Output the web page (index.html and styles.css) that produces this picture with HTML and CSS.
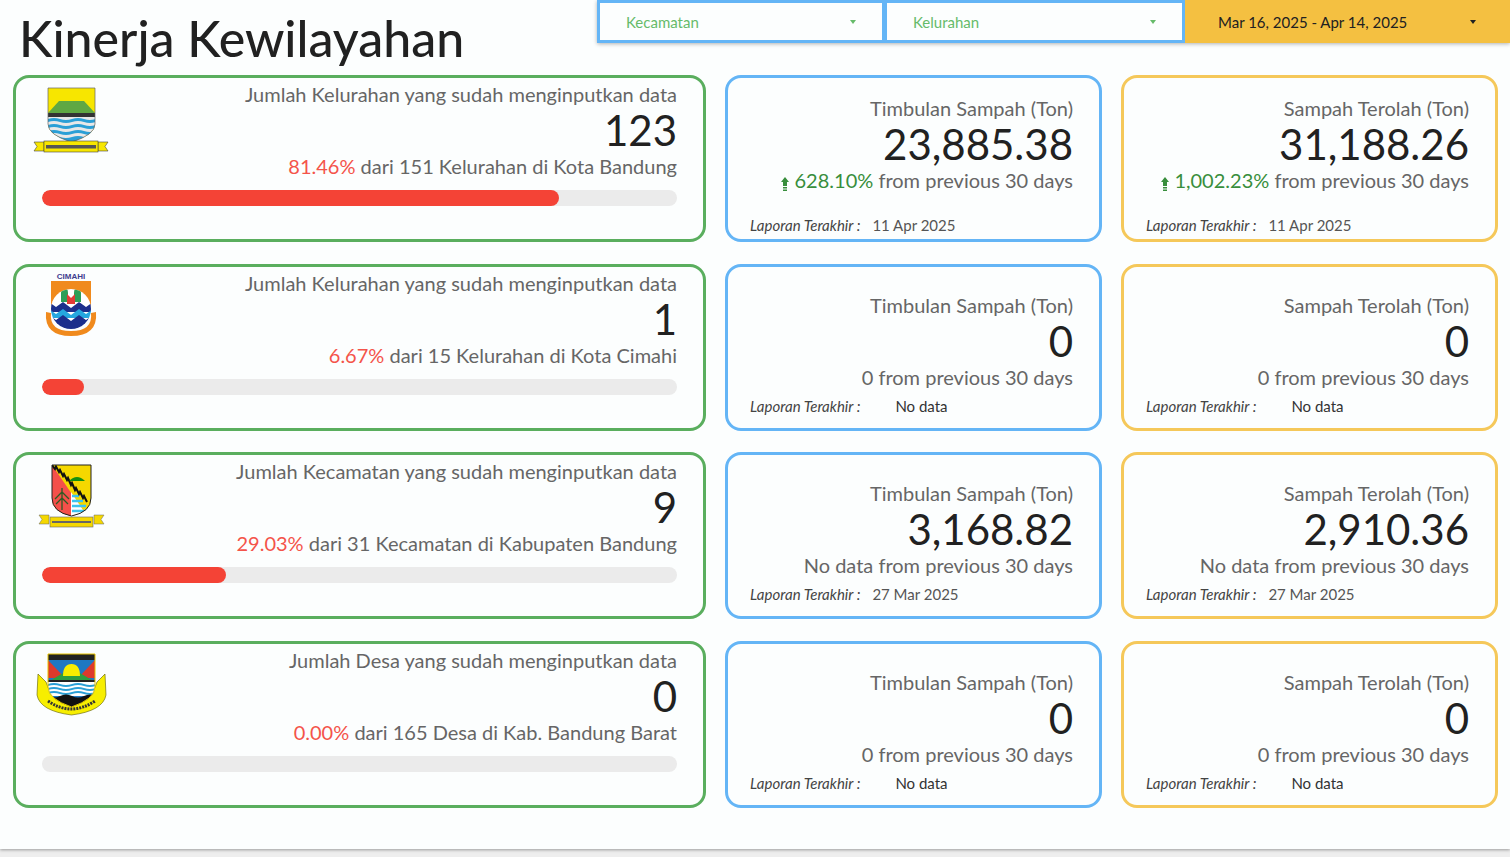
FILE: index.html
```html
<!DOCTYPE html>
<html lang="en">
<head>
    <meta charset="UTF-8">
    <meta name="viewport" content="width=device-width, initial-scale=1.0">
    <title>Kinerja Kewilayahan</title>
    <link rel="stylesheet" href="styles.css">
</head>
<body>
    <div class="page">
        <header class="header">
            <h1>Kinerja Kewilayahan</h1>
            <div class="filters">
                <div class="select select-kec"><span>Kecamatan</span><i class="caret"></i></div>
                <div class="select select-kel"><span>Kelurahan</span><i class="caret"></i></div>
                <div class="date-range"><span>Mar 16, 2025 - Apr 14, 2025</span><i class="caret"></i></div>
            </div>
        </header>

        <div class="grid">
            <!-- Kota Bandung -->
            <div class="card region">
                <div class="region-top">
                    <svg class="logo" viewBox="0 0 80 72">
                        <defs><clipPath id="bdg"><path d="M17 5H64V41Q64 52 40.500 59Q17 52 17 41Z"/></clipPath></defs>
                        <g clip-path="url(#bdg)">
                            <rect x="17" y="5" width="47" height="54" fill="#f7e600"/>
                            <path d="M17 30L28 18H53L64 30V33H17Z" fill="#5fa843"/>
                            <rect x="17" y="30" width="47" height="4" fill="#333"/>
                            <rect x="17" y="34" width="47" height="25" fill="#e8e8e8"/>
                            <path d="M17 36q6 -2 12 0t12 0t12 0t12 0v3q-6 2 -12 0t-12 0t-12 0t-12 0z" fill="#2a9fd6"/>
                            <path d="M17 42q6 -2 12 0t12 0t12 0t12 0v3q-6 2 -12 0t-12 0t-12 0t-12 0z" fill="#2a9fd6"/>
                            <path d="M17 48q6 -2 12 0t12 0t12 0t12 0v3q-6 2 -12 0t-12 0t-12 0t-12 0z" fill="#2a9fd6"/>
                            <path d="M17 54q6 -2 12 0t12 0t12 0t12 0v5h-47z" fill="#2a9fd6"/>
                        </g>
                        <path d="M17 5H64V41Q64 52 40.500 59Q17 52 17 41Z" fill="none" stroke="#666" stroke-width=".7"/>
                        <path d="M3 59H13V68H3L6 63.500ZM77 59H67V68H77L74 63.500Z" fill="#f7e600" stroke="#444" stroke-width=".6"/>
                        <rect x="13" y="58" width="54" height="11" fill="#f7e600" stroke="#444" stroke-width=".6"/>
                        <rect x="15" y="62" width="50" height="3.500" fill="#555"/>
                    </svg>
                    <div class="region-text">
                        <div class="card-title">Jumlah Kelurahan yang sudah menginputkan data</div>
                        <div class="big-number">123</div>
                        <div class="card-sub"><span class="pct-red">81.46%</span> dari 151 Kelurahan di Kota Bandung</div>
                    </div>
                </div>
                <div class="bar"><div class="bar-fill" style="width: 81.46%"></div></div>
            </div>
            <div class="card stat stat-blue stat-raised">
                <div class="stat-body">
                    <div class="card-title">Timbulan Sampah (Ton)</div>
                    <div class="big-number">23,885.38</div>
                    <div class="card-sub"><svg class="up" viewBox="0 0 8 14"><path d="M4 0L8 5H6V9H2V5H0ZM2 10H6V11.500H2ZM2 12.500H6V14H2Z"/></svg> <span class="pct-green">628.10%</span> from previous 30 days</div>
                </div>
                <div class="stat-foot"><em>Laporan Terakhir :</em><span class="foot-date">11 Apr 2025</span></div>
            </div>
            <div class="card stat stat-yellow stat-raised">
                <div class="stat-body">
                    <div class="card-title">Sampah Terolah (Ton)</div>
                    <div class="big-number">31,188.26</div>
                    <div class="card-sub"><svg class="up" viewBox="0 0 8 14"><path d="M4 0L8 5H6V9H2V5H0ZM2 10H6V11.500H2ZM2 12.500H6V14H2Z"/></svg> <span class="pct-green">1,002.23%</span> from previous 30 days</div>
                </div>
                <div class="stat-foot"><em>Laporan Terakhir :</em><span class="foot-date">11 Apr 2025</span></div>
            </div>

            <!-- Kota Cimahi -->
            <div class="card region">
                <div class="region-top">
                    <svg class="logo" viewBox="0 0 80 72">
                        <defs><clipPath id="cmh"><circle cx="40" cy="37" r="20"/></clipPath></defs>
                        <text class="logo-word" x="40" y="7" text-anchor="middle">CIMAHI</text>
                        <path d="M20 9H60V36H20Z" fill="#f08a1d"/>
                        <circle cx="40" cy="37" r="20" fill="#fff"/>
                        <g clip-path="url(#cmh)">
                            <path d="M30 30V21q0 -5 3.500 -5t3.500 5V30ZM43 30V21q0 -5 3.500 -5t3.500 5V30Z" fill="#2e9e57"/>
                            <path d="M36 22L40 26L44 22V32H36Z" fill="#e23b36"/>
                            <path d="M18 30l7 5l7 -5l8 6l8 -6l7 5l7 -5V40H18Z" fill="#1c2f8c"/>
                            <path d="M18 37l7 5l7 -5l8 6l8 -6l7 5l7 -5V46H18Z" fill="#25a7df"/>
                            <path d="M18 43l7 5l7 -5l8 6l8 -6l7 5l7 -5V60H18Z" fill="#1c2f8c"/>
                        </g>
                        <path d="M15 40Q13 64 40 64Q67 64 65 40L60 41Q62 59 40 59Q18 59 20 41Z" fill="#f08a1d"/>
                    </svg>
                    <div class="region-text">
                        <div class="card-title">Jumlah Kelurahan yang sudah menginputkan data</div>
                        <div class="big-number">1</div>
                        <div class="card-sub"><span class="pct-red">6.67%</span> dari 15 Kelurahan di Kota Cimahi</div>
                    </div>
                </div>
                <div class="bar"><div class="bar-fill" style="width: 6.67%"></div></div>
            </div>
            <div class="card stat stat-blue">
                <div class="stat-body">
                    <div class="card-title">Timbulan Sampah (Ton)</div>
                    <div class="big-number">0</div>
                    <div class="card-sub">0 from previous 30 days</div>
                </div>
                <div class="stat-foot"><em>Laporan Terakhir :</em><span class="foot-nodata">No data</span></div>
            </div>
            <div class="card stat stat-yellow">
                <div class="stat-body">
                    <div class="card-title">Sampah Terolah (Ton)</div>
                    <div class="big-number">0</div>
                    <div class="card-sub">0 from previous 30 days</div>
                </div>
                <div class="stat-foot"><em>Laporan Terakhir :</em><span class="foot-nodata">No data</span></div>
            </div>

            <!-- Kabupaten Bandung -->
            <div class="card region">
                <div class="region-top">
                    <svg class="logo" viewBox="0 0 80 72">
                        <defs><clipPath id="kab"><path d="M21 5H60V38Q60 52 40.500 56Q21 52 21 38Z"/></clipPath></defs>
                        <g clip-path="url(#kab)">
                            <rect x="21" y="5" width="39" height="52" fill="#f5d800"/>
                            <path d="M21 5L56 56H21Z" fill="#f4504a"/>
                            <path d="M40 32L56 56H40Z" fill="#fff"/>
                            <path d="M41 36H48M41 41H52M41 46H55M41 51H57" stroke="#3cc3ee" stroke-width="2.500"/>
                            <path d="M21 5L24 9L25 6.500L28 12L29 10L32 16L33 14L36 20L37 18L40 25L41 23L44 30L45 28L48 34L49 32L52 38L53 36L56 42" fill="none" stroke="#111" stroke-width="2"/>
                        </g>
                        <path d="M38 19Q46 11 54 19Z" fill="#14900f" transform="translate(0 2)"/>
                        <path d="M31 28V50M31 32L24 39M31 32L38 39M31 38L25 44M31 38L37 44" stroke="#2c5a22" stroke-width="1.300" fill="none"/>
                        <path d="M21 5H60V38Q60 52 40.500 56Q21 52 21 38Z" fill="none" stroke="#222" stroke-width="1"/>
                        <path d="M8 55H18V64H8L11 59.500ZM73 55H63V64H73L70 59.500Z" fill="#f5d800" stroke="#666" stroke-width=".5"/>
                        <rect x="19" y="57" width="43" height="10" fill="#f5d800" stroke="#666" stroke-width=".6"/>
                        <rect x="21" y="61" width="39" height="2" fill="#666"/>
                    </svg>
                    <div class="region-text">
                        <div class="card-title">Jumlah Kecamatan yang sudah menginputkan data</div>
                        <div class="big-number">9</div>
                        <div class="card-sub"><span class="pct-red">29.03%</span> dari 31 Kecamatan di Kabupaten Bandung</div>
                    </div>
                </div>
                <div class="bar"><div class="bar-fill" style="width: 29.03%"></div></div>
            </div>
            <div class="card stat stat-blue">
                <div class="stat-body">
                    <div class="card-title">Timbulan Sampah (Ton)</div>
                    <div class="big-number">3,168.82</div>
                    <div class="card-sub">No data from previous 30 days</div>
                </div>
                <div class="stat-foot"><em>Laporan Terakhir :</em><span class="foot-date">27 Mar 2025</span></div>
            </div>
            <div class="card stat stat-yellow">
                <div class="stat-body">
                    <div class="card-title">Sampah Terolah (Ton)</div>
                    <div class="big-number">2,910.36</div>
                    <div class="card-sub">No data from previous 30 days</div>
                </div>
                <div class="stat-foot"><em>Laporan Terakhir :</em><span class="foot-date">27 Mar 2025</span></div>
            </div>

            <!-- Kabupaten Bandung Barat -->
            <div class="card region">
                <div class="region-top">
                    <svg class="logo" viewBox="0 0 80 72">
                        <defs><clipPath id="kbb"><path d="M17 5H64V38Q64 50 40.500 58Q17 50 17 38Z"/></clipPath></defs>
                        <path d="M7 25L15 33L20 46Q40 62 61 46L66 33L74 25L75 46Q72 62 40.500 66Q9 62 6 46Z" fill="#f7ee00" stroke="#5b5a00" stroke-width=".6"/>
                        <g clip-path="url(#kbb)">
                            <rect x="17" y="5" width="47" height="54" fill="#1f78c1"/>
                            <rect x="17" y="5" width="47" height="6" fill="#222"/>
                            <path d="M17 11L34 29H17ZM64 11L47 29H64Z" fill="#dd3a2c"/>
                            <path d="M17 33L32 24H49L64 33Z" fill="#2e9e3f"/>
                            <path d="M32 27Q32 15 40.500 15Q49 15 49 27Z" fill="#f7ee00"/>
                            <rect x="17" y="31" width="47" height="2" fill="#222"/>
                            <rect x="17" y="33" width="47" height="14" fill="#fff"/>
                            <path d="M17 35q6 -2 12 0t12 0t12 0t12 0v2q-6 2 -12 0t-12 0t-12 0t-12 0zM17 39q6 -2 12 0t12 0t12 0t12 0v2q-6 2 -12 0t-12 0t-12 0t-12 0zM17 43q6 -2 12 0t12 0t12 0t12 0v2q-6 2 -12 0t-12 0t-12 0t-12 0z" fill="#2a9fd6"/>
                            <path d="M17 47q6 3 12 0t12 0t12 0t12 0V59H17Z" fill="#111"/>
                        </g>
                        <path d="M17 5H64V38Q64 50 40.500 58Q17 50 17 38Z" fill="none" stroke="#e8c400" stroke-width="1"/>
                        <path d="M17 52Q40 68 64 52" fill="none" stroke="#333" stroke-width="3" stroke-dasharray="2 1"/>
                    </svg>
                    <div class="region-text">
                        <div class="card-title">Jumlah Desa yang sudah menginputkan data</div>
                        <div class="big-number">0</div>
                        <div class="card-sub"><span class="pct-red">0.00%</span> dari 165 Desa di Kab. Bandung Barat</div>
                    </div>
                </div>
                <div class="bar"><div class="bar-fill" style="width: 0%"></div></div>
            </div>
            <div class="card stat stat-blue">
                <div class="stat-body">
                    <div class="card-title">Timbulan Sampah (Ton)</div>
                    <div class="big-number">0</div>
                    <div class="card-sub">0 from previous 30 days</div>
                </div>
                <div class="stat-foot"><em>Laporan Terakhir :</em><span class="foot-nodata">No data</span></div>
            </div>
            <div class="card stat stat-yellow">
                <div class="stat-body">
                    <div class="card-title">Sampah Terolah (Ton)</div>
                    <div class="big-number">0</div>
                    <div class="card-sub">0 from previous 30 days</div>
                </div>
                <div class="stat-foot"><em>Laporan Terakhir :</em><span class="foot-nodata">No data</span></div>
            </div>
        </div>
    </div>
</body>
</html>
```

FILE: styles.css
```css
html, body { height: 100%; }
body { margin: 0; background-color: #eeeeee; font-family: Lato, sans-serif; color: #666; overflow: hidden; }
.page { height: 849px; background-color: #fcfefe; box-shadow: 0 1px 3px rgba(0, 0, 0, .35); padding: 0 12px 0 13px; box-sizing: border-box; }

.header { display: flex; justify-content: space-between; height: 75px; margin-right: -12px; }
h1 { margin: 10px 0 0 6px; font-size: 50px; line-height: 56px; font-weight: 500; color: #212121; }
.filters { display: flex; height: 43px; box-shadow: 0 1px 4px rgba(0, 0, 0, .3); font-size: 15px; }
.select, .date-range { display: flex; justify-content: space-between; align-items: center; box-sizing: border-box; }
.select { background-color: #fcfefe; border: 3px solid #64b5f6; color: #66bb6a; }
.select-kec { width: 288px; padding: 0 26px 0 26px; }
.select-kel { width: 300px; padding: 0 26px 0 26px; border-left-width: 2px; }
.date-range { width: 325px; padding: 0 34px 0 33px; background-color: #f4c041; color: #212121; }
.caret { width: 0; height: 0; border-left: 3px solid transparent; border-right: 3px solid transparent; border-top: 4px solid currentColor; }

.grid { display: grid; grid-template-columns: 693px 377px 377px; grid-auto-rows: 167px; column-gap: 19px; row-gap: 21.500px; }
.card { border: 3px solid; border-radius: 16px; box-sizing: border-box; background-color: #fcfefe; }
.card-title { font-size: 20px; line-height: 24px; }
.big-number { font-size: 42px; line-height: 48px; color: #212121; }
.card-sub { font-size: 20px; line-height: 24px; }
.pct-red { color: #f4544a; }
.pct-green { color: #388e3c; }

.region { border-color: #5aae5e; padding: 4px 26px 0 26px; }
.region-top { display: flex; }
.logo { width: 80px; height: 72px; flex: none; margin: 1px 0 0 -11px; }
.logo-word { font-family: "Liberation Sans", sans-serif; font-size: 8px; font-weight: bold; fill: #3f3d8f; }
.region-text { flex: 1; text-align: right; }
.bar { height: 16px; margin-top: 12px; background-color: #ebebeb; border-radius: 8px; overflow: hidden; }
.bar-fill { height: 100%; background-color: #f44336; border-radius: 8px; }

.stat { display: flex; flex-direction: column; padding: 0 26px 0 22px; text-align: right; }
.stat-blue { border-color: #64b5f6; }
.stat-yellow { border-color: #f5c85a; }
.stat-body { padding-top: 26px; height: 129px; box-sizing: border-box; }
.stat-raised .stat-body { padding-top: 18px; height: 137px; }
.stat-foot { display: flex; font-size: 15px; line-height: 20px; color: #444; }
.stat-raised .stat-foot { margin-top: 0; }
.stat-foot em { font-style: italic; }
.foot-date { margin-left: 12px; color: #555; }
.foot-nodata { margin-left: 35px; color: #333; }
.up { width: 8px; height: 14px; fill: #388e3c; vertical-align: -3px; }
```
